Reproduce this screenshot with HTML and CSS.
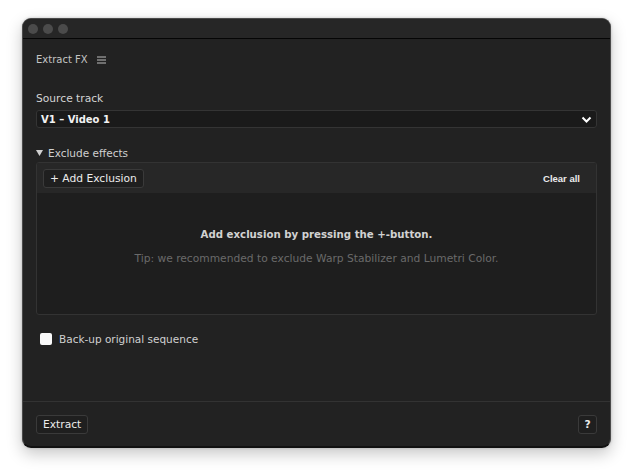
FILE: index.html
```html
<!DOCTYPE html>
<html>
<head>
<meta charset="utf-8">
<link rel="stylesheet" href="styles.css">
</head>
<body>
<div class="window">
  <div class="titlebar">
    <span class="light"></span><span class="light"></span><span class="light"></span>
  </div>
  <div class="content">
    <div class="apphead">
      <span>Extract FX</span>
      <svg class="menu" width="9" height="8" viewBox="0 0 9 8"><path d="M0 1h9M0 4h9M0 7h9" stroke="#bdbdbd" stroke-width="1"/></svg>
    </div>
    <div class="label">Source track</div>
    <div class="select">
      <span>V1 – Video 1</span>
      <svg width="11" height="7" viewBox="0 0 11 7"><path d="M1.5 1.5l4 4 4-4" fill="none" stroke="#fff" stroke-width="2"/></svg>
    </div>
    <div class="section">
      <svg width="7" height="6" viewBox="0 0 7 6"><path d="M0 0h7L3.5 6z" fill="#d0d0d0"/></svg>
      <span>Exclude effects</span>
    </div>
    <div class="panel">
      <div class="panelhead">
        <button class="btn">+ Add Exclusion</button>
        <span class="clear">Clear all</span>
      </div>
      <div class="panelbody">
        <div class="empty">Add exclusion by pressing the +-button.</div>
        <div class="tip">Tip: we recommended to exclude Warp Stabilizer and Lumetri Color.</div>
      </div>
    </div>
    <label class="check"><span class="box"></span><span>Back-up original sequence</span></label>
  </div>
  <div class="footer">
    <button class="btn">Extract</button>
    <button class="btn help">?</button>
  </div>
</div>
</body>
</html>
```
FILE: styles.css
```css
html, body { margin: 0; padding: 0; }
body {
  background: #ffffff;
  width: 634px;
  height: 475px;
  padding: 18px 23px 0 22px;
  box-sizing: border-box;
  font-family: "DejaVu Sans", Verdana, sans-serif;
  font-size: 11px;
}
.window {
  width: 589px;
  height: 430px;
  box-sizing: border-box;
  background: #222222;
  border: 1px solid #4a4a4a;
  border-bottom: 2px solid #111;
  border-radius: 9px;
  box-shadow: 0 6px 16px rgba(0,0,0,0.22), 0 0 3px rgba(0,0,0,0.2);
  display: flex;
  flex-direction: column;
  overflow: hidden;
}
.titlebar {
  height: 19px;
  flex: none;
  background: #262626;
  border-bottom: 1px solid #050505;
  display: flex;
  align-items: center;
  gap: 5px;
  padding-left: 5px;
}
.light {
  width: 10px;
  height: 10px;
  border-radius: 50%;
  background: #4b4b4b;
}
.content {
  flex: 1;
  padding: 0 13px 0 13px;
  display: flex;
  flex-direction: column;
}
.apphead {
  height: 40px;
  display: flex;
  align-items: center;
  gap: 9px;
  color: #c4c4c4;
  font-size: 10px;
}
.apphead .menu { margin-top: 1px; }
.label {
  margin-top: 13px;
  color: #d4d4d4;
  font-size: 10.7px;
  line-height: 14px;
}
.select {
  margin-top: 4px;
  height: 18px;
  box-sizing: border-box;
  background: #1a1a1a;
  border: 1px solid #343434;
  border-radius: 3px;
  display: flex;
  align-items: center;
  justify-content: space-between;
  padding: 0 4px 0 4px;
  color: #f2f2f2;
  font-weight: bold;
  font-size: 10px;
}
.section {
  margin-top: 18px;
  display: flex;
  align-items: center;
  gap: 5px;
  color: #d0d0d0;
  font-size: 10.5px;
  line-height: 14px;
}
.panel {
  margin-top: 2px;
  height: 153px;
  box-sizing: border-box;
  border: 1px solid #333;
  border-radius: 3px;
  background: #1e1e1e;
  display: flex;
  flex-direction: column;
  overflow: hidden;
}
.panelhead {
  height: 30px;
  flex: none;
  background: #272727;
  display: flex;
  align-items: center;
  justify-content: space-between;
  padding: 0 16px 0 6px;
}
.btn {
  font-family: inherit;
  font-size: 10.7px;
  color: #ececec;
  background: #1f1f1f;
  border: 1px solid #3a3a3a;
  border-radius: 3px;
  height: 19px;
  padding: 0 6px;
  line-height: 17px;
}
.clear {
  color: #ececec;
  font-family: "Liberation Sans", Arial, sans-serif;
  font-weight: bold;
  font-size: 9.5px;
}
.panelbody {
  flex: 1;
  display: flex;
  flex-direction: column;
  align-items: center;
  padding-top: 35px;
}
.empty {
  color: #d2d2d2;
  font-weight: bold;
  font-size: 10.2px;
  line-height: 14px;
}
.tip {
  margin-top: 10px;
  color: #6a6a6a;
  font-size: 10.7px;
  line-height: 14px;
}
.check {
  margin-top: 18px;
  display: flex;
  align-items: center;
  gap: 7px;
  padding-left: 4px;
  color: #d0d0d0;
  font-size: 10.5px;
}
.box {
  width: 12px;
  height: 12px;
  border-radius: 2px;
  background: #fafafa;
}
.footer {
  flex: none;
  height: 44px;
  border-top: 1px solid #333;
  display: flex;
  align-items: center;
  justify-content: space-between;
  padding: 0 13px;
}
.help {
  width: 19px;
  padding: 0;
  font-weight: bold;
}
```
